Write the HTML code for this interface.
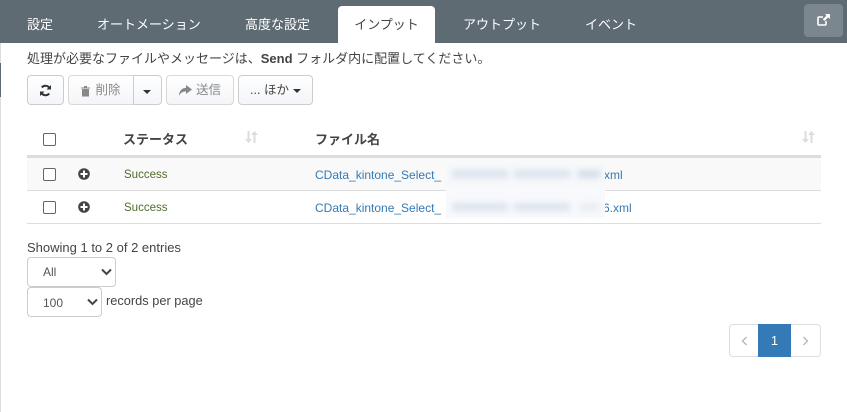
<!DOCTYPE html>
<html lang="ja"><head><meta charset="utf-8"><style>
html,body{margin:0;padding:0;background:#fff}
body{width:847px;height:412px;position:relative;overflow:hidden;font-family:"Liberation Sans","Noto Sans CJK JP",sans-serif;color:#444;font-size:13px}
.a{position:absolute;white-space:nowrap}
.t{top:8px;height:34px;line-height:33px;color:#fff;font-size:13px}
.b{position:absolute;top:75px;height:30px;box-sizing:border-box;border:1px solid #ccc;border-radius:4px;background:linear-gradient(#fff,#f3f5f8);line-height:29px;font-size:12.5px;color:#888;text-align:center}
.cb{position:absolute;left:43px;width:11px;height:11px;border:1px solid #666;border-radius:2px;background:#fff}
.line{position:absolute;left:27px;width:794px;background:#ddd}
.lnk{color:#337ab7;font-size:12px}
.sel{position:absolute;box-sizing:border-box;border:1px solid #ccc;border-radius:4px;background:#fff;font-size:12px;color:#555}
.blur{position:absolute;height:8px;background:#dde4ee;filter:blur(3px)}
</style></head><body>
<div class="a" style="left:0;top:0;width:847px;height:43px;background:#5f6b73"></div>
<div class="a" style="left:338px;top:6px;width:97px;height:37px;background:#fff;border-radius:4px 4px 0 0"></div>
<div class="a" style="left:0;top:43px;width:1px;height:369px;background:#ddd"></div>
<div class="a" style="left:0;top:63px;width:1px;height:34px;background:#5f6b73"></div>
<div class="a t" style="left:27px;">設定</div>
<div class="a t" style="left:97px;">オートメーション</div>
<div class="a t" style="left:245px;">高度な設定</div>
<div class="a t" style="left:354px;color:#444;width:65px;text-align:center">インプット</div>
<div class="a t" style="left:463px;">アウトプット</div>
<div class="a t" style="left:585px;">イベント</div>
<div class="a" style="left:804px;top:4px;width:39px;height:33px;background:#7c868f;border-radius:4px"></div>
<svg class="a" style="left:816px;top:13px" width="16" height="14" viewBox="0 0 16 14"><path d="M10 8v3a1 1 0 0 1-1 1H3a1 1 0 0 1-1-1V5a1 1 0 0 1 1-1h4" fill="none" stroke="#fff" stroke-width="1.600"/><path d="M9 1h5v5l-1.800-1.700L8.500 8 6.800 6.300 10.500 2.700z" fill="#fff"/></svg>
<div class="a" style="left:27px;top:50px;line-height:18px;font-size:13px;color:#444">処理が必要なファイルやメッセージは、<b>Send</b> フォルダ内に配置してください。</div>
<div class="b" style="left:27px;width:37px;color:#333"></div>
<svg class="a" style="left:39px;top:84px" width="13" height="13" viewBox="0 0 13 13"><path d="M11 5A4.800 4.800 0 0 0 2.800 3.500M2 8a4.800 4.800 0 0 0 8.200 1.500" fill="none" stroke="#333" stroke-width="2"/><path d="M12 1v4.500H7.500zM1 12V7.500h4.500z" fill="#333"/></svg>
<div class="b" style="left:68px;width:66px;border-radius:4px 0 0 4px;padding-left:14px;border-color:#d8d8d8">削除</div>
<svg class="a" style="left:80px;top:85px" width="11" height="12" viewBox="0 0 11 12"><path d="M1 2.500h9v1H1zM4 1h3v1.500H4zM2 4h7v7.500H2z" fill="#888"/></svg>
<div class="b" style="left:133px;width:29px;border-radius:0 4px 4px 0;border-color:#ccc"></div>
<div class="a" style="left:143px;top:90px;border:4px solid transparent;border-top-color:#333;border-bottom:0"></div>
<div class="b" style="left:166px;width:68px;padding-left:17px;border-color:#d8d8d8">送信</div>
<svg class="a" style="left:178px;top:85px" width="14" height="12" viewBox="0 0 14 12"><path d="M8 0l6 4.500L8 9V6.500C5 6.500 2.500 7.500 1 11 1 6 4 3 8 2.800z" fill="#888"/></svg>
<div class="b" style="left:238px;width:75px;color:#444">... ほか<span style="display:inline-block;margin-left:4px;vertical-align:middle;border:4px solid transparent;border-top-color:#333;border-bottom:0"></span></div>

<div class="cb" style="top:133px"></div>
<div class="a" style="left:123px;top:131px;font-weight:bold;font-size:13px;line-height:18px;color:#444">ステータス</div>
<div class="a" style="left:315px;top:131px;font-weight:bold;font-size:13px;line-height:18px;color:#444">ファイル名</div>
<svg class="a" style="left:245px;top:130px" width="13" height="14" viewBox="0 0 13 14"><path d="M2.500 1h2v8H7l-3.500 4L0 9h2.500zM8.500 13h2V5H13L9.500 1 6 5h2.500z" fill="#dcdcdc"/></svg>
<svg class="a" style="left:802px;top:130px" width="13" height="14" viewBox="0 0 13 14"><path d="M2.500 1h2v8H7l-3.500 4L0 9h2.500zM8.500 13h2V5H13L9.500 1 6 5h2.500z" fill="#dcdcdc"/></svg>

<div class="a" style="left:27px;top:158px;width:794px;height:32px;background:#f9f9f9"></div>
<div class="line" style="top:155px;height:3px;background:#ddd"></div>
<div class="line" style="top:190px;height:1px"></div>
<div class="line" style="top:223px;height:1px"></div>
<div class="cb" style="top:168px"></div>
<div class="cb" style="top:201px"></div>
<svg class="a" style="left:78px;top:168px" width="12" height="12" viewBox="0 0 12 12"><circle cx="6" cy="6" r="5.800" fill="#444"/><path d="M5 2.500h2V5h2.500v2H7v2.500H5V7H2.500V5H5z" fill="#fff"/></svg>
<svg class="a" style="left:78px;top:201px" width="12" height="12" viewBox="0 0 12 12"><circle cx="6" cy="6" r="5.800" fill="#444"/><path d="M5 2.500h2V5h2.500v2H7v2.500H5V7H2.500V5H5z" fill="#fff"/></svg>
<div class="a" style="left:124px;top:167px;line-height:17px;font-size:11.500px;color:#4f6b2c">Success</div>
<div class="a" style="left:124px;top:200px;line-height:17px;font-size:11.500px;color:#4f6b2c">Success</div>
<div class="a lnk" style="left:315px;top:167px;line-height:17px">CData_kintone_Select_</div>
<div class="a lnk" style="left:315px;top:200px;line-height:17px">CData_kintone_Select_</div>
<div class="a lnk" style="left:604px;top:167px;line-height:17px">xml</div>
<div class="a lnk" style="left:603px;top:200px;line-height:17px">6.xml</div>
<div class="a" style="left:446px;top:162px;width:159px;height:26px;background:#f6f8fa"></div>
<div class="a" style="left:446px;top:188px;width:159px;height:30px;background:#f8f9fc"></div>
<div class="blur" style="left:452px;top:170px;width:56px"></div>
<div class="blur" style="left:514px;top:170px;width:56px"></div>
<div class="blur" style="left:578px;top:170px;width:22px;background:#d6deea"></div>
<div class="blur" style="left:452px;top:203px;width:56px"></div>
<div class="blur" style="left:514px;top:203px;width:56px"></div>
<div class="blur" style="left:580px;top:203px;width:20px;background:#e8edf4"></div>

<div class="a" style="left:27px;top:239px;line-height:18px;font-size:13px;color:#444">Showing 1 to 2 of 2 entries</div>
<div class="sel" style="left:27px;top:257px;width:89px;height:30px;line-height:29px;padding-left:15px">All</div>
<svg class="a" style="left:101px;top:268px" width="11" height="8" viewBox="0 0 11 8"><path d="M1 1.500l4.500 4.500L10 1.500" fill="none" stroke="#444" stroke-width="2"/></svg>
<div class="sel" style="left:27px;top:287px;width:75px;height:30px;line-height:31px;padding-left:15px">100</div>
<svg class="a" style="left:87px;top:298px" width="11" height="8" viewBox="0 0 11 8"><path d="M1 1.500l4.500 4.500L10 1.500" fill="none" stroke="#444" stroke-width="2"/></svg>
<div class="a" style="left:106px;top:292px;line-height:18px;font-size:12.800px;color:#444">records per page</div>

<div class="a" style="left:729px;top:324px;width:92px;height:33px;box-sizing:border-box;border:1px solid #ddd;border-radius:4px;background:#fff"></div>
<div class="a" style="left:758px;top:324px;width:33px;height:33px;background:#337ab7;color:#fff;text-align:center;line-height:33px;font-size:13px">1</div>
<svg class="a" style="left:741px;top:336px" width="7" height="10" viewBox="0 0 7 10"><path d="M5.500 1L1.500 5l4 4" fill="none" stroke="#b5b5b5" stroke-width="1.300"/></svg>
<svg class="a" style="left:802px;top:336px" width="7" height="10" viewBox="0 0 7 10"><path d="M1.500 1l4 4-4 4" fill="none" stroke="#b5b5b5" stroke-width="1.300"/></svg>
</body></html>
